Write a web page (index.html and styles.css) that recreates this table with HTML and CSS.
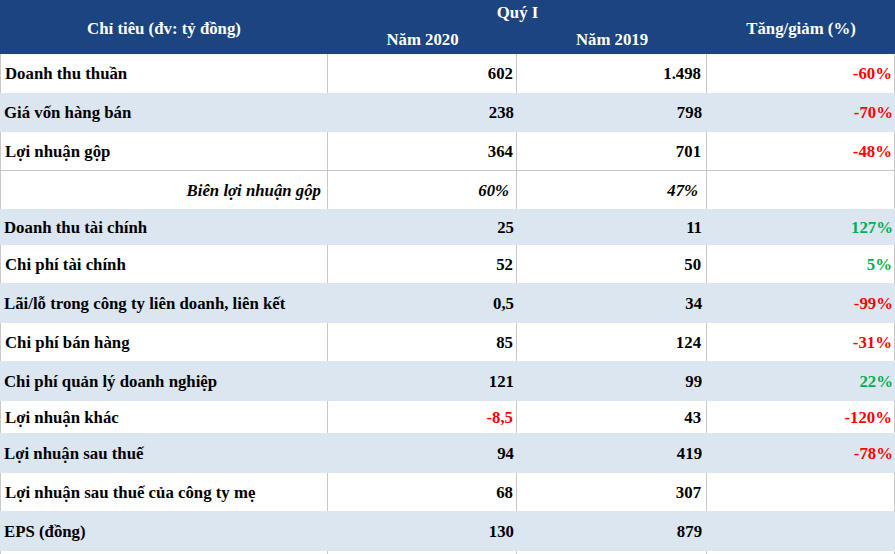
FILE: index.html
```html
<!DOCTYPE html>
<html lang="vi">
<head>
<meta charset="utf-8">
<title>Kết quả kinh doanh Quý I</title>
<link rel="stylesheet" href="styles.css">
</head>
<body>
<table class="report">
  <colgroup>
    <col class="c-name">
    <col class="c-num">
    <col class="c-num2">
    <col class="c-chg">
  </colgroup>
  <thead>
    <tr class="h1">
      <th rowspan="2" class="span">Chỉ tiêu (đv: tỷ đồng)</th>
      <th colspan="2" class="quarter">Quý I</th>
      <th rowspan="2" class="span">Tăng/giảm (%)</th>
    </tr>
    <tr class="h2">
      <th>Năm 2020</th>
      <th>Năm 2019</th>
    </tr>
  </thead>
  <tbody>
    <tr class="w r39"><td class="name">Doanh thu thuần</td><td>602</td><td>1.498</td><td class="neg">-60%</td></tr>
    <tr class="b r39"><td class="name">Giá vốn hàng bán</td><td>238</td><td>798</td><td class="neg">-70%</td></tr>
    <tr class="w r38"><td class="name">Lợi nhuận gộp</td><td>364</td><td>701</td><td class="neg">-48%</td></tr>
    <tr class="w r39 sep"><td class="name sub">Biên lợi nhuận gộp</td><td class="it">60%</td><td class="it">47%</td><td></td></tr>
    <tr class="b r36"><td class="name">Doanh thu tài chính</td><td>25</td><td>11</td><td class="pos">127%</td></tr>
    <tr class="w r38"><td class="name">Chi phí tài chính</td><td>52</td><td>50</td><td class="pos">5%</td></tr>
    <tr class="b r40"><td class="name">Lãi/lỗ trong công ty liên doanh, liên kết</td><td>0,5</td><td>34</td><td class="neg">-99%</td></tr>
    <tr class="w r38"><td class="name">Chi phí bán hàng</td><td>85</td><td>124</td><td class="neg">-31%</td></tr>
    <tr class="b r40"><td class="name">Chi phí quản lý doanh nghiệp</td><td>121</td><td>99</td><td class="pos">22%</td></tr>
    <tr class="w r32"><td class="name">Lợi nhuận khác</td><td class="neg">-8,5</td><td>43</td><td class="neg">-120%</td></tr>
    <tr class="b r40"><td class="name">Lợi nhuận sau thuế</td><td>94</td><td>419</td><td class="neg">-78%</td></tr>
    <tr class="w r38"><td class="name">Lợi nhuận sau thuế của công ty mẹ</td><td>68</td><td>307</td><td></td></tr>
    <tr class="b r40"><td class="name">EPS (đồng)</td><td>130</td><td>879</td><td></td></tr>
    <tr class="w r38"><td class="name"></td><td></td><td></td><td></td></tr>
  </tbody>
</table>
</body>
</html>
```

FILE: styles.css
```css
html, body {
  margin: 0;
  padding: 0;
  background: #ffffff;
}

body {
  font-family: "Liberation Serif", "Times New Roman", serif;
  font-weight: bold;
  font-size: 16.8px;
  color: #000000;
  overflow: hidden;
}

.report {
  border-collapse: separate;
  border-spacing: 0;
  table-layout: fixed;
  width: 895px;
}

.c-name { width: 328px; }
.c-num { width: 189px; }
.c-num2 { width: 190px; }
.c-chg { width: 188px; }

.report th {
  background: #1b4480;
  color: #ffffff;
  font-weight: bold;
  font-size: 16.8px;
  padding: 0;
  text-align: center;
  vertical-align: middle;
  line-height: 20px;
}

.h1 { height: 26px; }
.h2 { height: 28px; }
.report th.span { padding-top: 3px; }

.report td {
  padding: 1px 3px 0 3px;
  text-align: right;
  vertical-align: middle;
  white-space: nowrap;
  box-sizing: border-box;
}

.report td:nth-child(3) { padding-right: 5px; }
.report td:nth-child(4) { padding-right: 2px; }

.report td.name {
  text-align: left;
  padding-left: 4px;
}

.report td.sub {
  text-align: right;
  font-style: italic;
  padding-right: 6px;
}

.report td.it {
  font-style: italic;
  padding-right: 7px;
}

.report td.it:nth-child(3) { padding-right: 8px; }

.w td {
  background: #ffffff;
  border-right: 1px solid #c8c8c8;
}

.w td:first-child {
  border-left: 1px solid #c8c8c8;
}

.b td {
  background: #dce6f1;
}

.sep td {
  border-top: 1px solid #c8c8c8;
}

.r32 { height: 32px; }
.r36 { height: 36px; }
.r38 { height: 38px; }
.r39 { height: 39px; }
.r40 { height: 40px; }

.neg { color: #ff0000; }
.pos { color: #00b050; }
```
